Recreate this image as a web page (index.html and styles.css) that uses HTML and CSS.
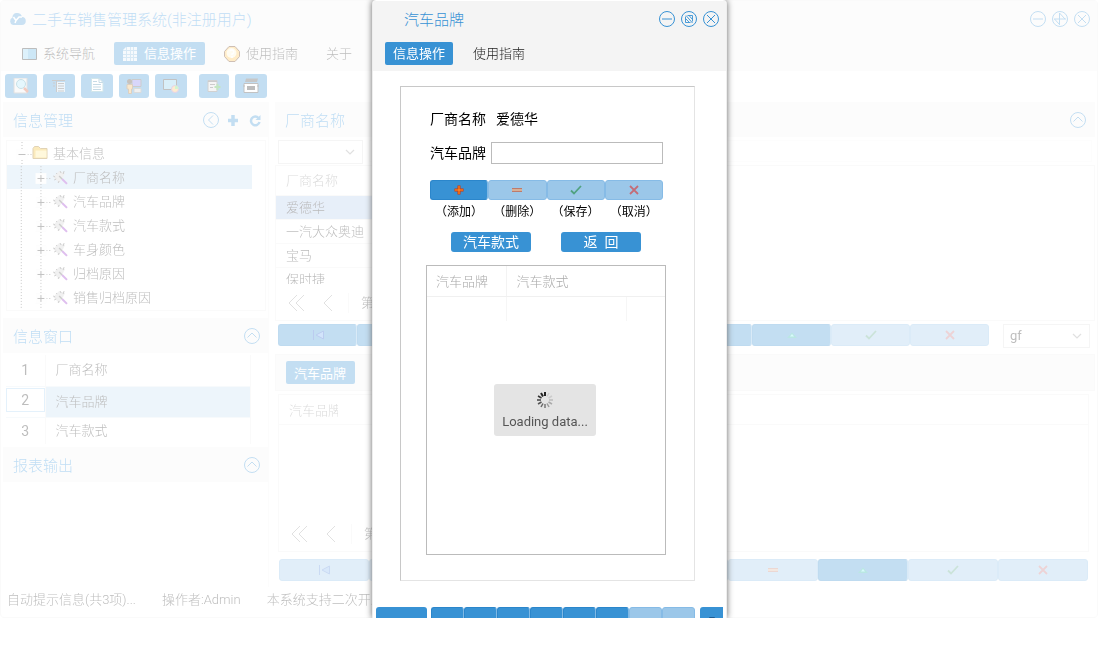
FILE: index.html
```html
<!DOCTYPE html>
<html lang="zh-CN">
<head>
<meta charset="utf-8">
<title>二手车销售管理系统</title>
<link rel="stylesheet" href="styles.css">
</head>
<body>
<svg class="defs" aria-hidden="true">
  <symbol id="min" viewBox="0 0 16 16"><circle cx="8" cy="8" r="7.5"/><path d="M3 8h10"/></symbol>
  <symbol id="restore" viewBox="0 0 16 16"><circle cx="8" cy="8" r="7.5"/><path d="M6.500 4.500h5v6M4.500 5.500v6h5M5 4.500l6.500 7.500M4.500 7.500l4 4M8 4.500l3.500 4" stroke-width=".9"/></symbol>
  <symbol id="max" viewBox="0 0 16 16"><circle cx="8" cy="8" r="7.500"/><path d="M7.500 2v12M2 8h12M7.500 2l5.500 6M2.500 8l5 5.500"/></symbol>
  <symbol id="close" viewBox="0 0 16 16"><circle cx="8" cy="8" r="7.500"/><path d="M4 4l8 8M12 4l-8 8"/></symbol>
  <symbol id="up" viewBox="0 0 16 16"><circle cx="8" cy="8" r="7.500"/><path d="M3.500 9.500L8 5l4.500 4.500"/></symbol>
  <symbol id="left" viewBox="0 0 16 16"><circle cx="8" cy="8" r="7.500"/><path d="M10 3.500L5.500 8l4.500 4.500"/></symbol>
  <symbol id="first" viewBox="0 0 12 10"><path d="M1.500 0v10" stroke="#1c56c8" fill="none"/><path d="M11.500 1v8L4 5z" fill="#6aa4f0" stroke="#1c56c8"/></symbol>
  <symbol id="tri" viewBox="0 0 12 10"><path d="M1 8L6 2.500 11 8z" fill="#18b0a0"/><path d="M4 6.500L6 4l2 2.500z" fill="#7ff0f0"/></symbol>
  <symbol id="minus" viewBox="0 0 12 10"><path d="M1 3.500h10v3H1z" fill="#ffa060"/><path d="M1 3.500h10M1 6.500h10" stroke="#d24a1c"/></symbol>
  <symbol id="plus" viewBox="0 0 12 10"><path d="M6 .5v9M1.500 5h9" stroke="#d83400" stroke-width="3"/><path d="M6 1v8M2 5h8" stroke="#ff9a2c"/></symbol>
  <symbol id="tick" viewBox="0 0 12 10"><path d="M1 5.500L4 8.500 11 1" fill="none" stroke="#1f8a3c" stroke-width="1.800"/></symbol>
  <symbol id="cross" viewBox="0 0 12 10"><path d="M2 1l8 8M10 1L2 9" fill="none" stroke="#e0302c" stroke-width="1.800"/></symbol>
  <symbol id="chev" viewBox="0 0 10 6"><path d="M1 1l4 4 4-4" fill="none" stroke="#999" stroke-width="1.200"/></symbol>
  <symbol id="pg" viewBox="0 0 60 20"><path d="M9 2L1 10l8 8M16 2l-8 8 8 8M44 2l-8 8 8 8" fill="none" stroke="#999"/></symbol>
  <symbol id="branch" viewBox="0 0 62 24">
    <path d="M14.500 0v24M34.500 0v24M40 12.500h6" fill="none" stroke="#444" stroke-dasharray="1 2"/>
    <path d="M29 7h11v11H29z" fill="#fafafa"/><path d="M31 12.500h7M34.500 9v7" stroke="#333" fill="none"/>
    <path d="M47 11l6-6 6 2-2 4-4 6z" fill="#d0d0d0"/><path d="M47 10l2 1M50 7l1 1M54 5l1 2M58 5l-1 3M48 14l2-1M52 17l1-2" stroke="#555"/>
    <path d="M56 13l5 5" stroke="#9428c8" stroke-width="2"/><path d="M53 10l3 3" stroke="#555" stroke-width="1.500"/>
  </symbol>
</svg>

<div class="desktop">
  <div class="app">
    <header class="app-head">
      <div class="title-row">
        <svg class="logo" width="17" height="16" viewBox="0 0 17 16"><path d="M4 14a4 4 0 0 1-.5-7.500A4 4 0 0 1 8 2a5 5 0 0 1 5 4 4 4 0 0 1-.5 8z" fill="#4d9bd5"/><path d="M4.500 6l2.500 3.500L10 6h3M7 9.500L6 12" fill="none" stroke="#fff" stroke-width="1.500"/></svg>
        <h1>二手车销售管理系统(非注册用户)</h1>
        <div class="tools">
          <button aria-label="最小化"><svg><use href="#min"/></svg></button>
          <button aria-label="最大化"><svg><use href="#max"/></svg></button>
          <button aria-label="关闭"><svg><use href="#close"/></svg></button>
        </div>
      </div>
      <nav class="menu">
        <button><svg width="15" height="13" viewBox="0 0 15 13"><path d="M.5.5h14v11H.5z" fill="#58aee0" stroke="#222"/><path d="M1 1h5v10H1z" fill="#8dd0f2"/></svg>系统导航</button>
        <button class="on"><svg width="14" height="14" viewBox="0 0 14 14"><path d="M3 0h11v14H0V3z" fill="#fff" opacity=".85"/><path d="M3.500 0v14M7.500 0v14M10.500 0v14M0 3.500h14M0 7.500h14M0 10.500h14" stroke="#7db4dd" fill="none"/></svg>信息操作</button>
        <button><svg width="16" height="16" viewBox="0 0 16 16"><path d="M5 .5h6l4.500 5v5l-4.500 5H5l-4.500-5v-5z" fill="#ffbe46" stroke="#5a2b08"/><circle cx="7.500" cy="7" r="5" fill="#fff3cf"/><path d="M6 5a2 2 0 1 1 2 3v1M8 10v2" fill="none" stroke="#fff" stroke-width="1.500"/></svg>使用指南</button>
        <button>关于</button>
      </nav>
    </header>

    <div class="toolbar">
      <button aria-label="查找"><svg viewBox="0 0 16 16"><path d="M1 0h13v15H1z" fill="#eee" stroke="#999"/><circle cx="8" cy="6" r="4.500" fill="#a8e4f8" stroke="#499ab0"/><path d="M11 10l4 4" stroke="#d0502c" stroke-width="2.500"/></svg></button>
      <button aria-label="列表"><svg viewBox="0 0 16 16"><path d="M5 4h9v10H5z" fill="#fff" opacity=".7"/><path d="M1 2.500h13M5.500 2v12M7 5.500h6M7 8h6M7 10.500h6M7 13h6M2 5h2M2 8h2" stroke="#555" fill="none"/></svg></button>
      <button aria-label="文档"><svg viewBox="0 0 16 16"><path d="M2.500.5H10l4 4v9H2.500z" fill="#fff" stroke="#66aabb"/><path d="M10 .5v4h4M4 3.500h4M4 6.500h8M4 9h8M4 11.500h8" stroke="#4488aa" fill="none"/></svg></button>
      <button class="narrow" aria-label="用户"><svg viewBox="0 0 16 16"><path d="M6 1.500h9v7H6z" fill="#7d76ee" stroke="#555"/><path d="M8 10.500h7v4H8z" fill="#ccc" stroke="#888"/><circle cx="3.500" cy="3.500" r="2.500" fill="#432"/><path d="M1 6.500h5.500V11h-1v4.500h-3V11H1z" fill="#eeb050" stroke="#8a6230"/></svg></button>
      <button aria-label="图表"><svg viewBox="0 0 16 16"><path d="M.5 1.500h13v10H.5z" fill="#80c8ec" stroke="#333"/><circle cx="12" cy="11" r="3.500" fill="#ffc060" stroke="#a66bb0"/><path d="M12 11V7.500a3.500 3.500 0 0 1 3.500 3.500z" fill="#66dd66"/></svg></button>
      <button class="narrow split" aria-label="新增"><svg viewBox="0 0 16 16"><path d="M2 2.500h9v11H2z" fill="#ddd" stroke="#666"/><path d="M2 3.500h9M4 6.500h5M4 9.500h3" stroke="#555"/><path d="M8.500 9h6M11.500 6v6" stroke="#3a3" stroke-width="2"/></svg></button>
      <button aria-label="打印"><svg viewBox="0 0 16 16"><path d="M3 .5h12l-1 3.500H2z" fill="#444"/><path d="M1 5.500h14v9H1z" fill="#fff" stroke="#333"/><path d="M4 8h8v4H4z" fill="#222"/><path d="M0 8h2M14 8h2" stroke="#333"/></svg></button>
    </div>

    <div class="body">
      <aside class="side">
        <section>
          <div class="panel-head nav-head"><h2>信息管理</h2>
            <div class="tools">
              <button aria-label="收起"><svg><use href="#left"/></svg></button>
              <button aria-label="展开全部"><svg viewBox="0 0 16 16"><path d="M8 3v11M3 8.500h10" stroke-width="3.500"/></svg></button>
              <button aria-label="刷新"><svg viewBox="0 0 16 16"><path d="M11.500 6a4.300 4.300 0 1 0 1 4" stroke-width="2.500"/><path d="M13.500 3v5h-5z" fill="#3892d4" stroke="none"/></svg></button>
            </div>
          </div>
          <ul class="tree">
            <li class="root"><svg width="40" height="24" viewBox="0 0 40 24"><path d="M14.500 0v24M20 12.500h4" stroke="#444" stroke-dasharray="1 2"/><path d="M9 7h11v11H9z" fill="#fafafa"/><path d="M11 12.500h7" stroke="#333"/><path d="M25.500 16.500v-10l1.500-2h4l2 2h6.500v10z" fill="#f2b91c" stroke="#9a6c0c"/><path d="M28 8.500h11v7H28z" fill="#ffe68a"/></svg>基本信息</li>
            <li class="sel"><svg><use href="#branch"/></svg>厂商名称</li>
            <li><svg><use href="#branch"/></svg>汽车品牌</li>
            <li><svg><use href="#branch"/></svg>汽车款式</li>
            <li><svg><use href="#branch"/></svg>车身颜色</li>
            <li><svg><use href="#branch"/></svg>归档原因</li>
            <li><svg><use href="#branch"/></svg>销售归档原因</li>
          </ul>
        </section>
        <section>
          <div class="panel-head"><h2>信息窗口</h2><div class="tools"><button aria-label="折叠"><svg><use href="#up"/></svg></button></div></div>
          <table class="windows">
            <tr><th>1</th><td>厂商名称</td></tr>
            <tr class="sel"><th><span>2</span></th><td>汽车品牌</td></tr>
            <tr><th>3</th><td>汽车款式</td></tr>
          </table>
        </section>
        <section>
          <div class="panel-head"><h2>报表输出</h2><div class="tools"><button aria-label="折叠"><svg><use href="#up"/></svg></button></div></div>
        </section>
      </aside>

      <main class="main">
        <section class="makers">
          <div class="panel-head"><h2>厂商名称</h2><div class="tools"><button aria-label="折叠"><svg><use href="#up"/></svg></button></div></div>
          <div class="filter">
            <label class="combo"><select aria-label="筛选"><option></option></select><svg class="arrow"><use href="#chev"/></svg></label>
            <input aria-label="关键字">
          </div>
          <div class="grid">
            <div class="grid-view">
              <table>
                <thead><tr><th>厂商名称</th></tr></thead>
                <tbody>
                  <tr class="sel"><td>爱德华</td></tr>
                  <tr><td>一汽大众奥迪</td></tr>
                  <tr><td>宝马</td></tr>
                  <tr><td>保时捷</td></tr>
                </tbody>
              </table>
            </div>
            <div class="pager"><svg><use href="#pg"/></svg><span>第</span></div>
          </div>
          <div class="record">
            <div class="bar">
              <button aria-label="首条"><svg><use href="#first"/></svg></button><button></button><button></button><button></button><button></button><button></button>
              <button aria-label="编辑"><svg><use href="#tri"/></svg></button>
              <button class="off" aria-label="保存"><svg><use href="#tick"/></svg></button>
              <button class="off" aria-label="取消"><svg><use href="#cross"/></svg></button>
            </div>
            <label class="combo"><select aria-label="方案"><option>gf</option></select><svg class="arrow"><use href="#chev"/></svg></label>
          </div>
        </section>
        <section class="brands">
          <div class="tabs"><button class="on">汽车品牌</button></div>
          <div class="grid lower">
            <div class="brand-head"><span>汽车品牌</span></div>
            <div class="pager"><svg><use href="#pg"/></svg><span>第</span></div>
          </div>
          <div class="bar last">
            <button class="off" aria-label="首条"><svg><use href="#first"/></svg></button><button class="off"></button><button class="off"></button><button class="off"></button><button></button>
            <button class="off" aria-label="删除"><svg><use href="#minus"/></svg></button>
            <button aria-label="编辑"><svg><use href="#tri"/></svg></button>
            <button class="off" aria-label="保存"><svg><use href="#tick"/></svg></button>
            <button class="off" aria-label="取消"><svg><use href="#cross"/></svg></button>
          </div>
        </section>
      </main>
    </div>
    <footer class="status"><span>自动提示信息(共3项)...</span><span>操作者:Admin</span><span>本系统支持二次开发</span></footer>
  </div>

  <div class="dialog" role="dialog" aria-labelledby="dlg-title">
    <header class="dialog-head">
      <div class="title-row">
        <h2 id="dlg-title">汽车品牌</h2>
        <div class="tools">
          <button aria-label="最小化"><svg><use href="#min"/></svg></button>
          <button aria-label="还原"><svg><use href="#restore"/></svg></button>
          <button aria-label="关闭"><svg><use href="#close"/></svg></button>
        </div>
      </div>
      <nav class="menu"><button class="on">信息操作</button><button>使用指南</button></nav>
    </header>
    <div class="sheet">
      <div class="field"><span>厂商名称</span><span class="value">爱德华</span></div>
      <div class="field"><label for="brand">汽车品牌</label><input id="brand" type="text"></div>
      <div class="bar actions">
        <button aria-labelledby="a1"><svg><use href="#plus"/></svg></button>
        <button class="off" aria-labelledby="a2"><svg><use href="#minus"/></svg></button>
        <button class="off" aria-labelledby="a3"><svg><use href="#tick"/></svg></button>
        <button class="off" aria-labelledby="a4"><svg><use href="#cross"/></svg></button>
      </div>
      <div class="captions"><span id="a1">（添加）</span><span id="a2">（删除）</span><span id="a3">（保存）</span><span id="a4">（取消）</span></div>
      <div class="links"><button>汽车款式</button><button>返&nbsp; 回</button></div>
      <div class="list">
        <table>
          <colgroup><col class="c1"><col class="c2"><col></colgroup>
          <thead><tr><th>汽车品牌</th><th colspan="2">汽车款式</th></tr></thead>
          <tbody><tr><td></td><td></td><td></td></tr></tbody>
        </table>
        <div class="loading">
          <svg width="16" height="16" viewBox="-8 -8 16 16" stroke-width="1.500"><path d="M0-4v-4" stroke="#222" stroke-width="2"/><path d="M-2-3.500l-2-3.500" stroke="#222" stroke-width="2"/><path d="M-3.500-2l-3.500-2" stroke="#333"/><path d="M-4 0h-4" stroke="#444"/><path d="M-3.500 2l-3.500 2" stroke="#555"/><path d="M-2 3.500l-2 3.500" stroke="#666"/><path d="M0 4v4" stroke="#777"/><path d="M2 3.500l2 3.500" stroke="#999"/><path d="M3.500 2l3.500 2" stroke="#aaa"/><path d="M4 0h4" stroke="#bbb"/><path d="M3.500-2l3.500-2M2-3.500l2-3.500" stroke="#ccc"/></svg>
          <span>Loading data...</span>
        </div>
      </div>
    </div>
    <div class="dock">
      <button class="jump"></button>
      <div class="bar"><button></button><button></button><button></button><button></button><button></button><button></button><button class="off"></button><button class="off"></button></div>
      <button class="more" aria-label="更多"><svg width="8" height="8" viewBox="0 0 8 8"><path d="M1.500 8V1.500h5V8" fill="none" stroke="#1d5c92"/></svg></button>
    </div>
  </div>
</div>
</body>
</html>
```
FILE: styles.css
```css
* { box-sizing: border-box; }
body {
  margin: 0;
  background: #fff;
  font: 300 13px/20px Roboto, "Noto Sans CJK SC", sans-serif;
  color: #222;
}
.defs { position: absolute; width: 0; height: 0; }
button, input, select { font: inherit; color: inherit; margin: 0; padding: 0; border: 0; background: none; }
h1, h2 { margin: 0; font-size: 15px; font-weight: 300; color: #3892d4; }
h1, .side h2, .main h2 { padding-top: 2px; color: #2a8fdc; }
table { border-collapse: collapse; border-spacing: 0; }
th { font-weight: 300; text-align: left; }
th, td { padding: 0; }

.desktop { position: relative; height: calc(100vh - 32px); min-height: 400px; overflow: hidden; background: #fff; }
.app {
  display: flex;
  flex-direction: column;
  height: 100%;
  opacity: .3;
  border: 1px solid #eee;
  border-radius: 4px;
}
.app-head { height: 70px; background: #f5f5f5; }
.title-row { display: flex; align-items: center; height: 35px; padding: 0 7px 0 8px; }
.logo { margin-right: 6px; }
.tools { display: flex; gap: 6px; margin-left: auto; }
.tools button { display: flex; width: 16px; height: 16px; }
.tools svg { width: 16px; height: 16px; fill: none; stroke: #3892d4; }

.menu { display: flex; align-items: center; height: 34px; padding-left: 12px; }
.menu button { display: flex; align-items: center; gap: 6px; height: 23px; padding: 2px 9px 0; margin-right: 10px; }
.menu .on { gap: 7px; }
.menu .on, .tabs .on { background: #3892d4; color: #fff; border-radius: 2px; font-weight: 400; }

.toolbar { display: flex; gap: 6px; height: 31px; padding: 3px 4px; }
.toolbar button { display: grid; place-items: center; width: 32px; height: 24px; background: #3892d4; border-radius: 3px; }
.toolbar .narrow { width: 30px; }
.toolbar .split { margin-left: 6px; }
.toolbar svg { width: 16px; height: 16px; }

.body { display: flex; flex: 1; gap: 6px; min-height: 0; }
.side { width: 268px; padding-left: 2px; border-right: 1px solid #f5f5f5; }
.panel-head { display: flex; align-items: center; height: 35px; padding: 0 8px 0 10px; background: #f5f5f5; }
.side .nav-head { padding-right: 5px; }
.tree { list-style: none; margin: 3px 2px 7px 3px; padding: 0 13px 0 0; height: 171px; border: 1px solid #eee; overflow: hidden; }
.tree li { display: flex; align-items: center; gap: 5px; height: 24px; padding-top: 1px; }
.tree li svg { width: 61px; height: 24px; fill: none; }
.tree .root svg { width: 41px; }
.tree .sel, .windows .sel td { background: #c2dcf0; }
.windows { width: 245px; margin: 2px 0 3px 3px; }
.windows tr { height: 31px; border-bottom: 1px solid #e4eef6; }
.windows tr:last-child { height: 27px; border: 0; }
.windows th { width: 39px; text-align: center; font-size: 14px; font-weight: 400; border-right: 1px solid #eee; }
.windows td { padding-left: 10px; border-right: 1px solid #eee; }
.windows .sel th span { display: block; height: 24px; margin-bottom: 4px; line-height: 22px; border: 1px solid #a5d0f0; }

.main { display: flex; flex: 1; flex-direction: column; min-width: 0; padding-right: 2px; }
.main .panel-head { padding-right: 9px; }
.filter { display: flex; gap: 6px; padding: 3px; height: 28px; }
.filter input { flex: 1; border: 1px solid #f8f8f8; }
.combo { position: relative; display: flex; width: 85px; height: 24px; border: 1px solid #ddd; }
.combo select { flex: 1; width: 100%; padding-left: 6px; appearance: none; font-size: 13px; font-weight: 400; }
.combo .arrow { position: absolute; right: 7px; top: 8px; width: 10px; height: 6px; pointer-events: none; }
.grid { border: 1px solid #eee; }
.makers .grid { height: 156px; }
.grid-view { height: 118px; overflow: hidden; }
.grid table { width: 160px; }
.grid th, .grid td { height: 24px; padding: 1px 10px 0; border-bottom: 1px solid #eee; }
.grid th { height: 29px; color: #888; }
.grid .sel { background: #b0c8ec; }
.grid td { color: #111; }
.pager { display: flex; align-items: center; height: 38px; padding-left: 12px; }
.pager svg { width: 60px; height: 20px; }
.pager span { border-left: 1px solid #eee; padding-left: 12px; }
.record { display: flex; gap: 14px; height: 33px; padding: 3px 5px 0 3px; }
.record .combo { width: 87px; }
.bar { display: flex; flex: 1; height: 22px; }
.bar button {
  display: grid;
  place-items: center;
  flex: 1;
  background: #3892d4;
  border: 1px solid #2b86cb;
  border-right-color: #7fb8e4;
  border-radius: 3px;
}
.bar svg { width: 12px; height: 10px; }
.bar .off { background: #9bc7e9; border-color: #86bbe6; }
.bar .off svg { opacity: .6; }
.brands { display: flex; flex: 1; flex-direction: column; }
.tabs { height: 37px; padding: 6px 10px; background: #f5f5f5; border: 1px solid #eee; }
.tabs button { display: block; padding: 2px 9px 0 8px; height: 23px; }
.lower { display: flex; flex: 1; flex-direction: column; margin: 3px 6px 7px 3px; }
.brand-head { height: 30px; padding: 6px 10px 0; border-bottom: 1px solid #eee; color: #888; }
.brand-head span { display: block; width: 49px; overflow: hidden; white-space: nowrap; }
.lower .pager { height: 34px; margin-top: auto; }
.brands .last { flex: none; margin: 0 7px 6px 4px; }
.status { display: flex; gap: 26px; height: 30px; padding: 3px 6px; }

.dialog {
  position: absolute;
  inset: 0 0 0 1px;
  width: 355px;
  margin: 0 auto;
  padding: 1px 3px 0;
  display: flex;
  flex-direction: column;
  overflow: hidden;
  background: #fff;
  border: solid #eee;
  border-width: 0 1px;
  border-radius: 4px 4px 0 0;
  box-shadow: 0 0 6px #666;
}
.dialog-head { flex: none; margin: 0 -3px; height: 70px; background: #f4f4f4; }
.dialog-head .title-row { padding-left: 31px; }
.dialog-head h2 { padding-top: 2px; }
.dialog .menu { padding-left: 12px; }
.dialog .menu button { padding: 2px 8px 0; margin-right: 12px; }
.sheet {
  flex: none;
  height: 495px;
  margin: 15px 28px 26px 24px;
  padding: 20px 28px 0 25px;
  border: 1px solid;
  border-color: #c8c8c8 #e4e4e4 #e4e4e4 #c8c8c8;
  font-weight: 400;
  color: #000;
}
.field { display: flex; align-items: center; gap: 5px; height: 24px; margin: 0 3px 10px 4px; font-size: 14px; }
.field .value { padding-left: 5px; }
.field input { flex: 1; min-width: 0; height: 22px; border: 1px solid #bbb; }
.actions { height: 20px; margin: 15px 3px 2px 4px; }
.captions { display: flex; margin: 0 3px 0 4px; font-size: 12px; }
.captions span { flex: 1; text-align: center; white-space: nowrap; }
.links { display: flex; gap: 30px; padding: 10px 0 13px 25px; }
.links button { width: 80px; height: 20px; padding-top: 1px; background: #3892d4; border-radius: 3px; color: #fff; font-size: 14px; line-height: 19px; }
.list { position: relative; height: 290px; border: 1px solid #bbb; font-weight: 300; }
.list table { width: 100%; table-layout: fixed; }
.c1 { width: 79px; }
.c2 { width: 120px; }
.list th { height: 30px; padding: 2px 9px 0; color: #aaa; border-right: 1px solid #f3f3f3; border-bottom: 1px solid #f0f0f0; }
.list th:last-child { padding-left: 10px; border-right: 0; }
.list td { height: 25px; border-right: 1px solid #f6f6f6; }
.list td:last-child { border-right: 0; }
.loading {
  position: absolute;
  inset: 0 2px 0 0;
  width: 102px;
  height: 52px;
  margin: auto;
  display: flex;
  flex-direction: column;
  align-items: center;
  gap: 4px;
  padding-top: 8px;
  background: #e4e4e4;
  border-radius: 3px;
  font-size: 13px;
  font-weight: 400;
  color: #555;
  white-space: nowrap;
}
.dock { display: flex; gap: 4px; height: 22px; flex: none; }
.dock .bar { margin-right: 1px; }
.jump { width: 51px; background: #3892d4; border-radius: 3px; }
.more { display: flex; justify-content: center; width: 23px; padding-top: 9px; background: #3892d4; border-radius: 3px 0 0 0; }
```
